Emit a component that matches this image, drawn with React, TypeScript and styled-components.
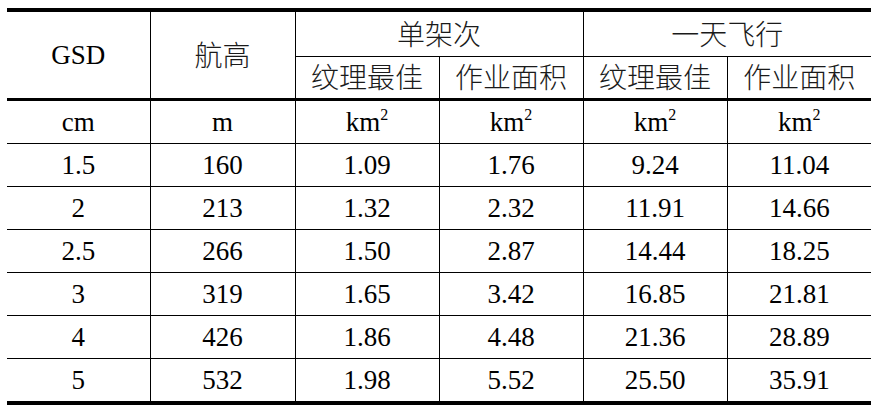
import React from 'react'
import styled, { createGlobalStyle } from 'styled-components'

const GlobalStyle = createGlobalStyle`
    body {
        margin: 0;
        background: #ffffff;
    }
`

const rows = [
    ['1.5', '160', '1.09', '1.76', '9.24', '11.04'],
    ['2', '213', '1.32', '2.32', '11.91', '14.66'],
    ['2.5', '266', '1.50', '2.87', '14.44', '18.25'],
    ['3', '319', '1.65', '3.42', '16.85', '21.81'],
    ['4', '426', '1.86', '4.48', '21.36', '28.89'],
    ['5', '532', '1.98', '5.52', '25.50', '35.91'],
]

const App: React.FC = () => {
    return (
        <>
            <GlobalStyle />
            <Page>
                <Table>
                    <colgroup>
                        <col style={{ width: 143 }} />
                        <col style={{ width: 145 }} />
                        <col style={{ width: 144 }} />
                        <col style={{ width: 144 }} />
                        <col style={{ width: 144 }} />
                        <col style={{ width: 144 }} />
                    </colgroup>
                    <thead>
                        <HeadRow $top>
                            <Cell rowSpan={2} $first>GSD</Cell>
                            <Cell rowSpan={2}><Han>航高</Han></Cell>
                            <Cell colSpan={2} $h={44}><Han>单架次</Han></Cell>
                            <Cell colSpan={2} $last $h={44}><Han>一天飞行</Han></Cell>
                        </HeadRow>
                        <HeadRow $thick>
                            <Cell $h={41}><Han>纹理最佳</Han></Cell>
                            <Cell $h={41}><Han>作业面积</Han></Cell>
                            <Cell $h={41}><Han>纹理最佳</Han></Cell>
                            <Cell $last $h={41}><Han>作业面积</Han></Cell>
                        </HeadRow>
                    </thead>
                    <tbody>
                        <BodyRow>
                            <Cell $first>cm</Cell>
                            <Cell>m</Cell>
                            <Cell>km<Sup>2</Sup></Cell>
                            <Cell>km<Sup>2</Sup></Cell>
                            <Cell>km<Sup>2</Sup></Cell>
                            <Cell $last>km<Sup>2</Sup></Cell>
                        </BodyRow>
                        {rows.map((r, i) => (
                            <BodyRow key={r[0]} $end={i === rows.length - 1}>
                                {r.map((v, j) => (
                                    <Cell key={j} $first={j === 0} $last={j === r.length - 1}>
                                        {v}
                                    </Cell>
                                ))}
                            </BodyRow>
                        ))}
                    </tbody>
                </Table>
            </Page>
        </>
    )
}

const Page = styled.div`
    padding: 8px 0 0 7px;
`

const Table = styled.table`
    border-collapse: collapse;
    table-layout: fixed;
    width: 864px;
`

const HeadRow = styled.tr<{ $top?: boolean; $thick?: boolean }>`
    border-top: ${(p) => (p.$top ? '4px solid #000' : 'none')};
    border-bottom: ${(p) => (p.$thick ? '3px solid #000' : '1px solid #000')};
`

const BodyRow = styled.tr<{ $end?: boolean }>`
    border-bottom: ${(p) => (p.$end ? '4px solid #000' : '1px solid #000')};
`

const Cell = styled.td<{ $first?: boolean; $last?: boolean; $h?: number }>`
    height: ${(p) => (p.$h ? `${p.$h}px` : '42px')};
    padding: 0;
    text-align: center;
    vertical-align: middle;
    line-height: 1;
    font-family: "Liberation Serif", "Times New Roman", serif;
    font-size: 27px;
    color: #000000;
    border-left: ${(p) => (p.$first ? 'none' : '1px solid #000')};
    border-right: ${(p) => (p.$last ? 'none' : '1px solid #000')};
    border-top: 1px solid #000;
    border-bottom: 1px solid #000;
`

const Han = styled.span`
    font-family: "Noto Sans CJK SC", sans-serif;
    font-size: 28px;
    font-weight: 300;
    color: #1a1a1a;
`

const Sup = styled.sup`
    font-size: 16px;
    vertical-align: 11px;
    line-height: 0;
`

export default App
